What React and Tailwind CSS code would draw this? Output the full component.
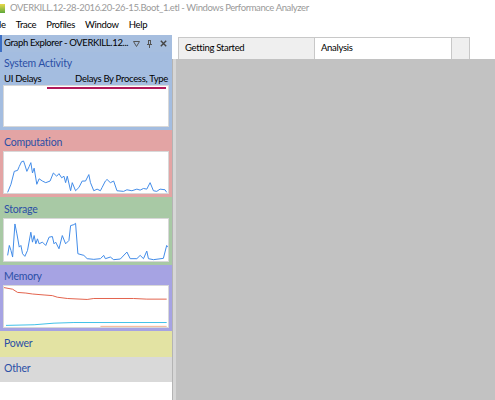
import React from 'react';

const FONT = { fontFamily: 'Lato, "Noto Sans", sans-serif' };

const CPU = '20,190 30,165 40,125 50,122 55,110 62,95 68,93 72,105 78,125 85,110 90,98 95,130 100,115 108,165 115,148 125,155 135,160 148,155 158,130 168,140 175,132 183,145 190,140 195,160 200,140 210,185 215,160 225,185 235,175 245,155 255,155 265,135 270,160 280,185 290,180 300,185 305,175 315,155 320,150 330,160 340,155 350,185 370,187 380,182 395,185 410,180 420,183 430,178 440,180 450,160 460,185 470,187 480,180 495,182 500,190';
const DISK = '20,375 25,345 30,360 35,380 42,280 48,310 55,350 60,345 65,370 72,378 80,360 90,305 95,335 100,315 105,340 110,325 115,340 125,335 135,345 145,320 155,318 160,340 165,335 175,355 185,315 195,340 205,330 210,285 220,282 225,278 232,370 250,375 260,385 280,387 300,385 310,375 315,385 330,380 340,388 360,386 380,365 390,385 410,385 420,375 430,385 440,362 445,385 460,388 490,384 500,345 503,350';
const MEM_RED = '9,80 35,85 50,95 75,97 95,100 130,103 155,105 170,110 200,114 260,117 280,114 400,114 440,116 500,116';
const MEM_CYAN = '15,198 100,196 160,191 220,189 500,189';

function Chart({ children, viewBox, h }) {
  return (
    <div className={`mx-[3px] bg-white border border-[#d8d8d8] ${h}`}>
      <svg width="100%" height="100%" viewBox={viewBox} preserveAspectRatio="none">
        {children}
      </svg>
    </div>
  );
}

const TITLE = 'text-[10.5px] tracking-[-0.2px] text-[#2b4fa6] pl-[4px]';

export default function App() {
  return (
    <div className="w-[495px] h-[400px] bg-white overflow-hidden flex flex-col text-black" style={FONT}>
      {/* title bar */}
      <div className="h-[16px] flex items-center text-[9.5px] tracking-[-0.4px] text-[#9a9a9a] shrink-0">
        <div className="w-[5px] h-[9px] bg-gradient-to-b from-[#e8d84a] to-[#5aa83a] mr-[5px]" />
        <span className="whitespace-nowrap">OVERKILL.12-28-2016.20-26-15.Boot_1.etl - Windows Performance Analyzer</span>
      </div>
      {/* menu */}
      <div className="h-[18px] flex items-center text-[9.5px] tracking-[-0.3px] shrink-0 -ml-[8px]">
        <span className="mr-[10px]">File</span>
        <span className="mr-[10px]">Trace</span>
        <span className="mr-[10px]">Profiles</span>
        <span className="mr-[10px]">Window</span>
        <span>Help</span>
      </div>
      <div className="flex flex-1 min-h-0 pt-[1px]">
        {/* graph explorer */}
        <div className="w-[172px] shrink-0 flex flex-col">
          <div className="h-[17px] bg-[#a6bedf] border-l-2 border-[#3d6fc4] flex items-center pl-[2px] pr-[5px] text-[9.5px] tracking-[-0.35px] shrink-0">
            <span className="flex-1 min-w-0 overflow-hidden whitespace-nowrap">Graph Explorer - OVERKILL.12...</span>
            <svg width="7" height="6" viewBox="0 0 7 6" className="mr-[7px] shrink-0"><path d="M0.5 0.5 H6.5 L3.5 5.5 Z" fill="none" stroke="#555" /></svg>
            <svg width="5" height="8" viewBox="0 0 5 8" className="mr-[8px] shrink-0"><path d="M1 0.5 H4 M1.5 1 V4.5 H3.5 V1 M0 4.5 H5 M2.5 4.5 V8" fill="none" stroke="#555" /></svg>
            <svg width="7" height="7" viewBox="0 0 7 7" className="shrink-0"><path d="M0.8 0.8 L6.2 6.2 M6.2 0.8 L0.8 6.2" stroke="#444" strokeWidth="1.4" /></svg>
          </div>
          {/* system activity */}
          <div className="h-[78px] bg-[#a4bde0] shrink-0 flex flex-col">
            <div className={`${TITLE} h-[18px] leading-[18px] mt-[2px]`}>System Activity</div>
            <div className="flex justify-between text-[9.5px] tracking-[-0.3px] px-[4px] h-[13px] leading-[13px]">
              <span>UI Delays</span>
              <span>Delays By Process, Type</span>
            </div>
            <div className="relative mx-[3px] h-[42px] bg-white border border-[#d8d8d8]">
              <div className="absolute top-[1px] left-[43px] right-[2px] h-[2px] bg-[#b0185a]" />
            </div>
          </div>
          {/* computation */}
          <div className="h-[67px] bg-[#e3a4a4] shrink-0 flex flex-col">
            <div className={`${TITLE} h-[21px] pt-[3px] leading-[18px]`}>Computation</div>
            <Chart viewBox="9 65 495 127" h="h-[43px]">
              <polyline points={CPU} fill="none" stroke="#3f8ae8" strokeWidth="3" />
            </Chart>
          </div>
          {/* storage */}
          <div className="h-[68px] bg-[#a8c9a5] shrink-0 flex flex-col">
            <div className={`${TITLE} h-[21px] pt-[3px] leading-[18px]`}>Storage</div>
            <Chart viewBox="9 265 495 127" h="h-[44px]">
              <polyline points={DISK} fill="none" stroke="#3f8ae8" strokeWidth="3" />
            </Chart>
          </div>
          {/* memory */}
          <div className="h-[66px] bg-[#a6a3e3] shrink-0 flex flex-col">
            <div className={`${TITLE} h-[20px] pt-[3px] leading-[17px]`}>Memory</div>
            <Chart viewBox="9 75 495 128" h="h-[43px]">
              <polyline points={MEM_RED} fill="none" stroke="#e2604a" strokeWidth="3" />
              <polyline points={MEM_CYAN} fill="none" stroke="#3cc0e6" strokeWidth="3" />
              <polyline points="300,201 500,201" fill="none" stroke="#f0b090" strokeWidth="3" />
            </Chart>
          </div>
          <div className={`${TITLE} h-[26px] bg-[#e3e3a3] shrink-0 leading-[24px]`}>Power</div>
          <div className={`${TITLE} h-[25px] bg-[#d9d9d9] shrink-0 leading-[23px]`}>Other</div>
          <div className="flex-1 bg-white" />
        </div>
        {/* splitter */}
        <div className="w-[4px] shrink-0 flex flex-col">
          <div className="h-[24px] bg-white" />
          <div className="flex-1 border-l border-[#b4b4b4] bg-[#d6d6d6]" />
        </div>
        {/* main area */}
        <div className="flex-1 flex flex-col">
          <div className="h-[24px] flex items-end pl-[2px] shrink-0 pt-[2px] text-[9.5px] tracking-[-0.3px]">
            <div className="w-[137px] h-full bg-[#efefef] border border-b-0 border-[#c8c8c8] pl-[6px] flex items-center">Getting Started</div>
            <div className="w-[137px] h-full bg-white border-t border-r border-[#c8c8c8] pl-[6px] flex items-center">Analysis</div>
            <div className="w-[18px] h-full bg-[#efefef] border-t border-r border-[#c8c8c8]" />
          </div>
          <div className="flex-1 bg-[#c2c2c2]" />
        </div>
      </div>
    </div>
  );
}
